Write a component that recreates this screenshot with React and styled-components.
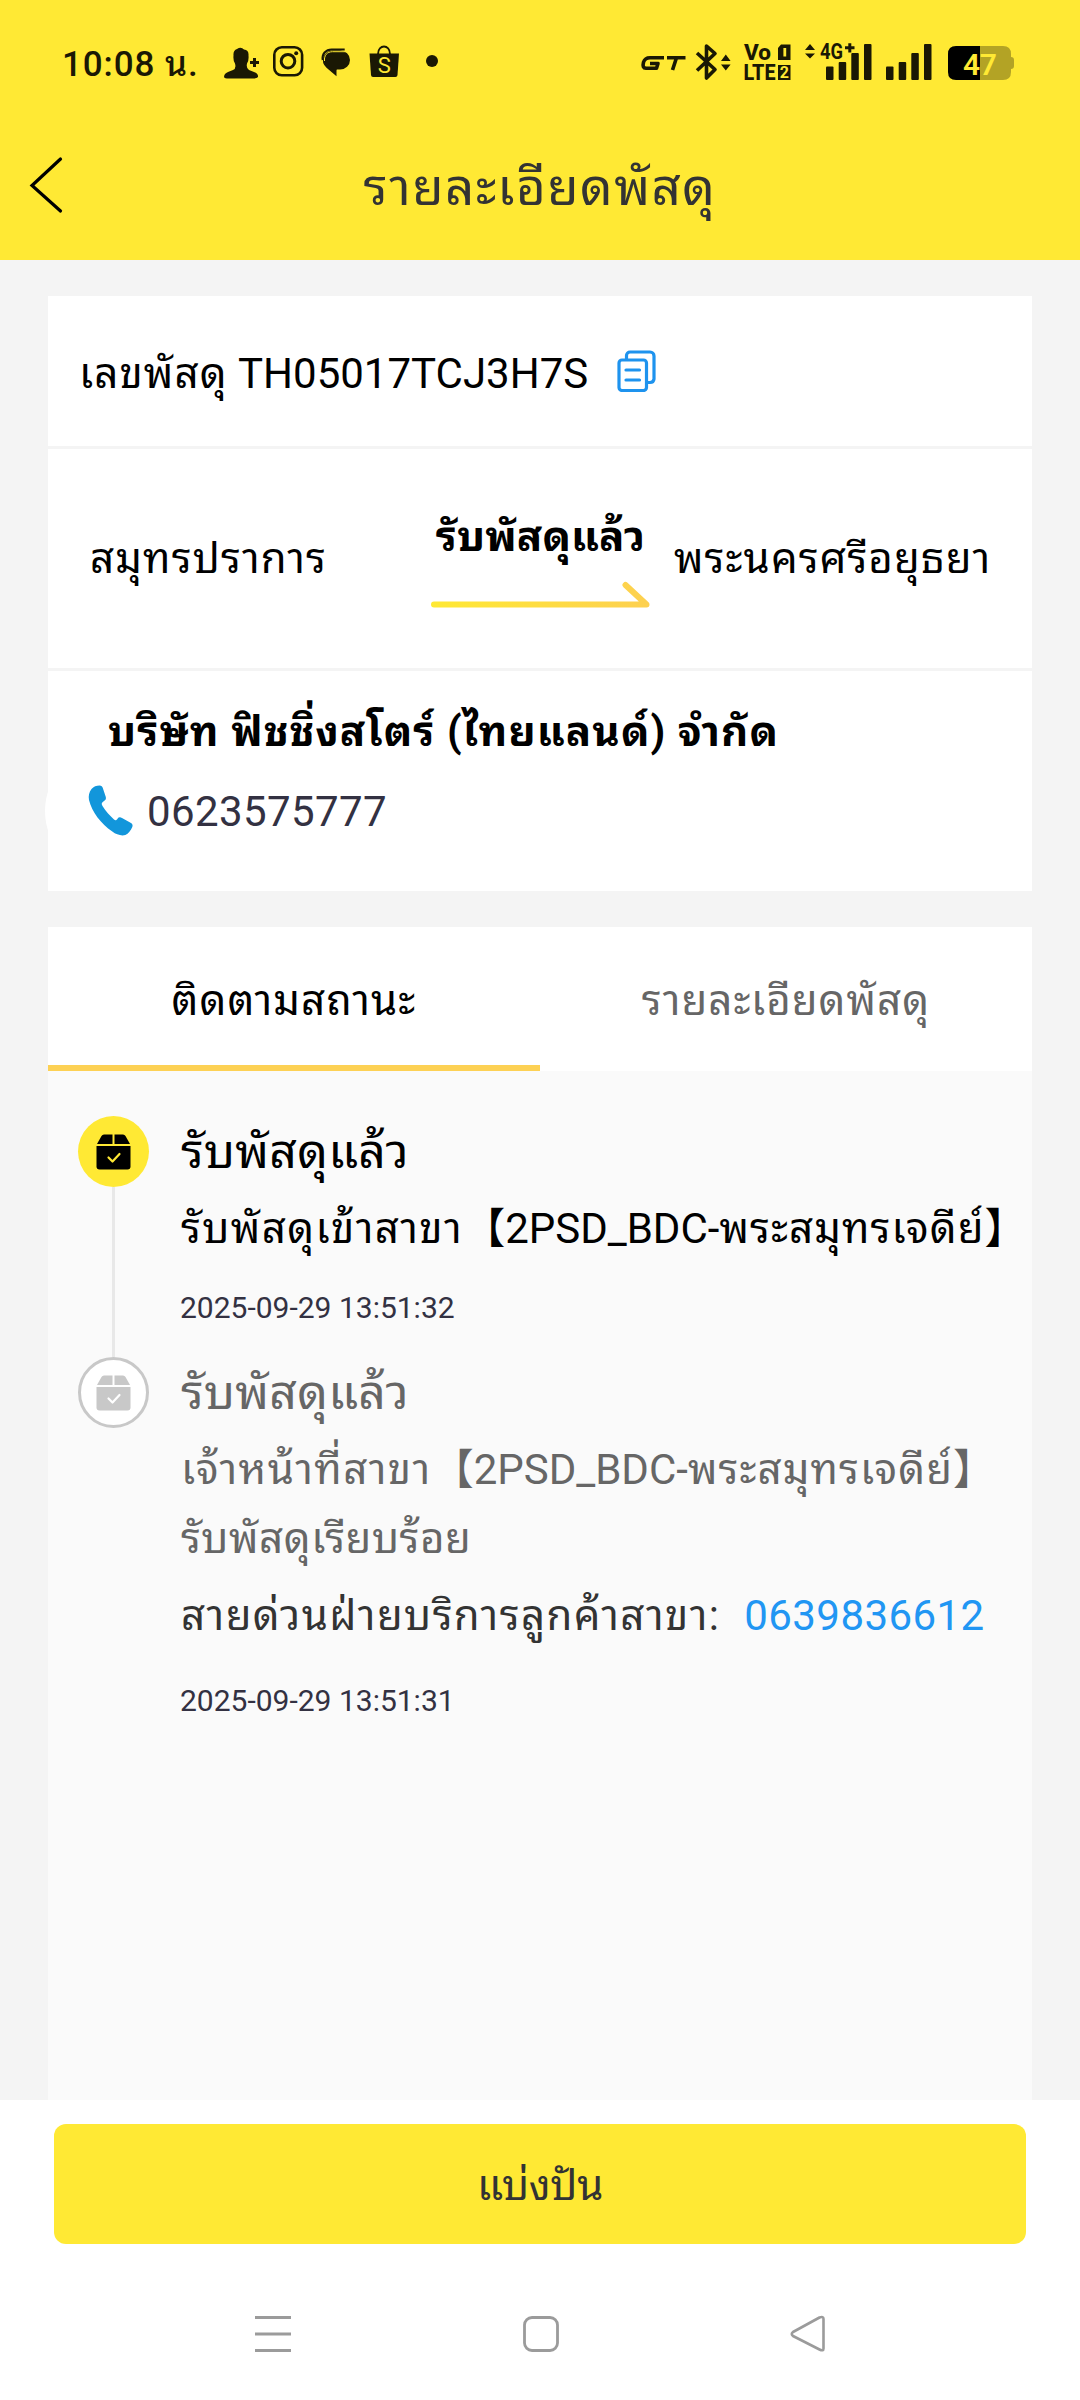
import React from "react";
import styled, { createGlobalStyle } from "styled-components";

const GlobalStyle = createGlobalStyle`
    :root {
        --yellow: #ffe934;
        --amber: #fdd154;
        --ink: #1a1804;
        --text: #333;
        --muted: #666;
        --slate: #333142;
        --blue: #2196f3;
        --page: #f4f4f4;
    }

    body {
        margin: 0;
        background: #fff;
        font-family: Roboto, "Noto Sans Thai Looped", "Noto Sans CJK SC", sans-serif;
        -webkit-font-smoothing: antialiased;
    }

    svg { display: block; flex-shrink: 0; }
`;

const Screen = styled.div`
    width: 1080px;
    height: 2400px;
    display: flex;
    flex-direction: column;
    overflow: hidden;
`;

const Top = styled.header`
    height: 260px;
    background: var(--yellow);
`;

const StatusBar = styled.div`
    height: 124px;
    display: flex;
    align-items: center;
    padding: 0 66px 0 62px;
    box-sizing: border-box;
    color: var(--ink);
`;

const Clock = styled.span`
    width: 162px;
    padding-top: 5px;
    font-size: 35px;
    font-weight: 500;
    letter-spacing: .9px;
    line-height: 50px;
    white-space: nowrap;
`;

const RightIcons = styled.div`
    display: flex;
    align-items: center;
    margin-left: auto;
`;

const NavBar = styled.div`
    height: 126px;
    display: grid;
    grid-template-columns: 120px 1fr 120px;
    align-items: center;
`;

const BackButton = styled.div`
    padding-left: 28px;
    margin-top: -4px;
`;

const Label = styled.span`
    display: block;
    font-size: ${props => props.$size || 42}px;
    line-height: ${props => props.$line || 60}px;
    font-weight: ${props => props.$bold ? 700 : 400};
    color: ${props => props.$color || "#000"};
    letter-spacing: ${props => props.$track || 0}px;
    white-space: nowrap;
`;

/* thai run inside a mixed line */
const Thai = styled.b`
    font-weight: inherit;
    letter-spacing: ${props => props.$track || 1.1}px;
`;

const PageTitle = styled(Label)`
    text-align: center;
    padding-top: 2px;
`;

const Main = styled.main`
    height: 1804px;
    padding: 36px 48px 0;
    background: var(--page);
    display: flex;
    flex-direction: column;
`;

const Card = styled.section`
    display: flex;
    flex-direction: column;
    gap: 3px;
    margin-bottom: 36px;
`;

const NumberRow = styled.div`
    height: 150px;
    display: flex;
    align-items: center;
    padding: 5px 31px 0;
    box-sizing: border-box;
    background: #fff;

    svg { margin-left: 29px; margin-top: -6px; }
`;

const RouteRow = styled.div`
    height: 219px;
    display: grid;
    grid-template-columns: 383px 219px 1fr;
    align-items: center;
    background: #fff;
`;

const RouteFrom = styled(Label)`
    padding-left: 42px;
`;

const RouteTo = styled(Label)`
    padding-left: 24px;
`;

const RouteState = styled.div`
    display: flex;
    flex-direction: column;
    align-items: center;
    gap: 13px;
`;

const CompanyRow = styled.div`
    height: 220px;
    padding-top: 31px;
    box-sizing: border-box;
    background: #fff;
`;

const CompanyName = styled(Label)`
    padding-left: 60px;
`;

const PhoneLine = styled.div`
    display: flex;
    align-items: center;
    position: relative;
    margin-top: 20px;
    padding-left: 40px;

    &::before {
        content: "";
        position: absolute;
        left: -3px;
        top: -34px;
        width: 126px;
        height: 126px;
        border-radius: 50%;
        background: #fff;
        clip-path: inset(30px 0 30px 0);
    }

    svg, span { position: relative; }
    svg { margin-top: -3px; }
    span { margin-left: 13px; }
`;

const Tabs = styled.div`
    height: 144px;
    display: grid;
    grid-template-columns: 1fr 1fr;
    background: #fff;
`;

const Tab = styled.div`
    display: flex;
    align-items: center;
    justify-content: center;
    padding-top: 9px;
    border-bottom: 6px solid ${props => props.$active ? "var(--amber)" : "#fff"};
`;

const Timeline = styled.div`
    flex: 1;
    padding: 45px 0 0 30px;
    background: #fafafa;
`;

const Item = styled.div`
    display: flex;
    gap: 32px;
`;

const Rail = styled.div`
    width: 71px;
    display: flex;
    flex-direction: column;
    align-items: center;
`;

const Badge = styled.div`
    width: 71px;
    height: 71px;
    box-sizing: border-box;
    border-radius: 50%;
    display: flex;
    align-items: center;
    justify-content: center;
    background: ${props => props.$active ? "var(--yellow)" : "#fff"};
    border: ${props => props.$active ? "0" : "3px solid #c8c8c8"};
`;

const Connector = styled.div`
    flex: 1;
    width: 3px;
    background: #e8e8e8;
`;

const ItemBody = styled.div`
    height: ${props => props.$height || "auto"};
`;

const Details = styled.div`
    padding-top: 7px;
`;

const Hotline = styled.div`
    display: flex;
    margin-top: 13px;
    gap: 24px;
`;

const Time = styled(Label)`
    margin-top: ${props => props.$gap}px;
    margin-left: -1px;
`;

const Footer = styled.footer`
    flex: 1;
    background: #fff;
    padding: 24px 54px 0;
`;

const ShareButton = styled.div`
    height: 120px;
    display: flex;
    align-items: center;
    justify-content: center;
    border-radius: 12px;
    padding-top: 3px;
    box-sizing: border-box;
    background: var(--yellow);
`;

const SystemNav = styled.nav`
    display: flex;
    justify-content: space-between;
    align-items: center;
    width: 571px;
    margin: 71px 0 0 201px;
`;

/* status bar drawings */

const NotificationIcons = () => (
    <svg width="216" height="34" viewBox="224 46 216 34" fill="currentColor">
        <path d="M237 50 q4 -2.500 7 .5 q5 .5 4.500 6 q.5 5 -1.500 8 q-1 5 2 6.500 l5 2 q4.500 1.500 4 5 q-1 1.500 -5 1.500 h-24 q-4.500 0 -5 -1.500 q0 -3.500 4 -5 l5 -2 q3.500 -1.500 2 -6.500 q-2 -3 -1.500 -8 q-.5 -5 3.500 -6.500z" />
        <path d="M250 63.500h9M254.500 59v9" stroke="currentColor" strokeWidth="3" />
        <g fill="none" stroke="currentColor" strokeWidth="2.600">
            <rect x="274.300" y="48.300" width="27.800" height="28" rx="7.500" />
            <circle cx="288" cy="62.200" r="6.800" strokeWidth="3" />
        </g>
        <circle cx="296.200" cy="54.200" r="2" />
        <path d="M332 51.500h8a10 9.500 0 0 1 0 19h-2.500c-.8 0-1 .5-1 1.200v5.500l-10-8.500a11 10 0 0 1 5.500-17.200z" />
        <path d="M322.700 61c-1-6 3-10.500 9-10.500h13" fill="none" stroke="currentColor" strokeWidth="2" />
        <path d="M324.500 62c-.5-5.500 2.500-9.300 8-9.300h13" fill="none" stroke="#ffe934" strokeWidth="1" />
        <path d="M369.500 54.500h29.500l-1.500 21.500q-.2 2-2 2h-22.500q-1.800 0-2-2z" />
        <path d="M378 55c0-10 12-10 12 0" fill="none" stroke="currentColor" strokeWidth="1.800" />
        <text x="384.200" y="74" fontSize="22" fontFamily="Roboto" textAnchor="middle" fill="#ffe934">S</text>
        <circle cx="432" cy="62" r="6" />
    </svg>
);

const SignalIcons = () => (
    <svg width="376" height="56" viewBox="638 34 376 56" fill="currentColor" fontFamily="Roboto">
        <g fill="none" stroke="currentColor" strokeWidth="3.600" strokeLinejoin="round">
            <path d="M664 57.800h-14q-5 0-6.500 4.500q-1.500 5.900 2.500 5.900h10.500l1.500-4.700h-8" />
            <path d="M667 57.800h18.500M676.500 57.800l-4 12.200" />
            <path d="M697 53l18 16.500l-8.500 8.500v-32l8.500 7.500l-18 17" />
        </g>
        <path d="M721 61l4.800-6.500l4.800 6.500zM721 64.500h9.600l-4.800 6z" />
        <text x="744" y="60" fontSize="22" fontWeight="800" textLength="27" lengthAdjust="spacingAndGlyphs">Vo</text>
        <text x="743.500" y="79.500" fontSize="22" fontWeight="800" textLength="32" lengthAdjust="spacingAndGlyphs">LTE</text>
        <path d="M781 44.500h9.500v15.500h-12.500v-12zM778 65h12.500v15h-12.500z" />
        <path d="M784.800 48v8.500" stroke="#ffe934" strokeWidth="2.800" />
        <text x="784.300" y="78.300" fontSize="16" fontWeight="700" textAnchor="middle" fill="#ffe934">2</text>
        <path d="M805 50l5-6l5 6zM805 53.500h10l-5 5z" />
        <text x="820" y="59" fontSize="21.500" fontWeight="700" textLength="23" lengthAdjust="spacingAndGlyphs">4G</text>
        <path d="M845 47.800h9.500M849.800 43.300v9.200" stroke="currentColor" strokeWidth="3" />
        <rect x="826" y="66.500" width="7.500" height="13.500" rx="1" />
        <rect x="838.700" y="62" width="7.500" height="18" rx="1" />
        <rect x="851.300" y="53" width="7.500" height="27" rx="1" />
        <rect x="864" y="44" width="7.500" height="36" rx="1" />
        <rect x="886" y="66.500" width="7.500" height="13.500" rx="1" />
        <rect x="898.700" y="62" width="7.500" height="18" rx="1" />
        <rect x="911.300" y="53" width="7.500" height="27" rx="1" />
        <rect x="924" y="44" width="7.500" height="36" rx="1" />
        <path d="M980 46h23q8 0 8 8v3q3 0 3 3v6q0 3-3 3v3q0 8-8 8h-23z" fill="#b3a325" />
        <path d="M980 46h-24q-8 0-8 8v18q0 8 8 8h24z" fill="#000" />
        <text x="963" y="74.600" fontSize="30" fontWeight="600" fill="#ffe934" textLength="34">47</text>
    </svg>
);

const CopyIcon = () => (
    <svg width="40" height="42" viewBox="0 0 40 42" fill="none" stroke="#1e93ee" strokeWidth="3.200" strokeLinecap="round">
        <path d="M9.500 9.500V5.500a3.500 3.500 0 0 1 3.500-3.500h20a4 4 0 0 1 4 4v23a4 4 0 0 1-4 3.500h-3" />
        <rect x="2" y="10" width="27.500" height="30.500" rx="3" />
        <path d="M9 20h13.500M9 30h13.500" />
    </svg>
);

const RouteArrow = () => (
    <svg width="219" height="30" viewBox="0 0 219 30">
        <defs>
            <linearGradient id="route" gradientUnits="userSpaceOnUse" x1="0" y1="0" x2="219" y2="0">
                <stop offset="0" stopColor="#ffe934" />
                <stop offset="1" stopColor="#fdd050" />
            </linearGradient>
        </defs>
        <path d="M3 24.500H215.500L194.500 5" fill="none" stroke="url(#route)" strokeWidth="6" strokeLinecap="round" strokeLinejoin="round" />
    </svg>
);

const PhoneIcon = () => (
    <svg width="46" height="52" viewBox="0 0 46 52" fill="#1296db">
        <path d="M3.500 4C5.500 1.500 8.500 .5 11.500 .5c2 0 2.800 1 3.300 2.500l3 9c.5 2-.3 3-1.800 4c-2.500 1.500-2.800 3-1.500 5c3.500 5.500 7.500 9.800 11.500 13.500c1.500 1.200 2.500 .8 3.500-.8c1-1.500 2.500-1.800 4.500-.8l9 5c1.500 1 2 2.300 1.300 4c-1.500 3.600-3.800 6.500-7 8.200c-4 1-9-.3-13-3.500C13 38.500 4 27.500 1 15C.3 11 1 7 3.500 4z" />
    </svg>
);

const PackageIcon = ({ color, check }) => (
    <svg width="35" height="36" viewBox="0 0 35 36" fill={color}>
        <path d="M8 .5h8.500v9.500H1L5.500 2Q6.300.5 8 .5zM18.500.5H27q1.700 0 2.500 1.500L34 10H18.500z" />
        <path d="M.5 12h34v20.500q0 3-3 3h-28q-3 0-3-3z" />
        <path d="M12.500 23.500l4 4l7-7.500" fill="none" stroke={check} strokeWidth="2.200" strokeLinecap="round" strokeLinejoin="round" />
    </svg>
);

const App = () => {
    return (
        <Screen>
            <GlobalStyle />
            <Top>
                <StatusBar>
                    <Clock>10:08 น.</Clock>
                    <NotificationIcons />
                    <RightIcons>
                        <SignalIcons />
                    </RightIcons>
                </StatusBar>
                <NavBar>
                    <BackButton>
                        <svg width="36" height="58" viewBox="0 0 36 58" fill="none" stroke="#000" strokeWidth="3.200" strokeLinecap="round">
                            <path d="M32.500 3L4 29.500L32.500 55" />
                        </svg>
                    </BackButton>
                    <PageTitle $size={51} $line={66} $track={1.5} $color="var(--text)">รายละเอียดพัสดุ</PageTitle>
                </NavBar>
            </Top>

            <Main>
                <Card>
                    <NumberRow>
                        <Label><Thai>เลขพัสดุ</Thai> TH05017TCJ3H7S</Label>
                        <CopyIcon />
                    </NumberRow>
                    <RouteRow>
                        <RouteFrom $track={1.15}>สมุทรปราการ</RouteFrom>
                        <RouteState>
                            <Label $bold $track={0.15}>รับพัสดุแล้ว</Label>
                            <RouteArrow />
                        </RouteState>
                        <RouteTo $track={1.1}>พระนครศรีอยุธยา</RouteTo>
                    </RouteRow>
                    <CompanyRow>
                        <CompanyName $bold $track={1.1}>บริษัท ฟิชชิ่งสโตร์ (ไทยแลนด์) จำกัด</CompanyName>
                        <PhoneLine>
                            <PhoneIcon />
                            <Label $color="var(--slate)" $track={0.4}>0623575777</Label>
                        </PhoneLine>
                    </CompanyRow>
                </Card>

                <Tabs>
                    <Tab $active>
                        <Label $track={1.1}>ติดตามสถานะ</Label>
                    </Tab>
                    <Tab>
                        <Label $track={1.05} $color="var(--muted)">รายละเอียดพัสดุ</Label>
                    </Tab>
                </Tabs>

                <Timeline>
                    <Item>
                        <Rail>
                            <Badge $active><PackageIcon color="#000" check="#ffe934" /></Badge>
                            <Connector />
                        </Rail>
                        <ItemBody $height="241px">
                            <Label $size={48} $line={71} $track={0.3}>รับพัสดุแล้ว</Label>
                            <Details>
                                <Label $line={69}><Thai $track={1.4}>รับพัสดุเข้าสาขา</Thai>【2PSD_BDC-<Thai>พระสมุทรเจดีย์</Thai>】</Label>
                            </Details>
                            <Time $size={30} $line={40} $gap={25} $color="var(--slate)">2025-09-29 13:51:32</Time>
                        </ItemBody>
                    </Item>
                    <Item>
                        <Rail>
                            <Badge><PackageIcon color="#c8c8c8" check="#fff" /></Badge>
                        </Rail>
                        <ItemBody>
                            <Label $size={48} $line={71} $track={0.3} $color="var(--muted)">รับพัสดุแล้ว</Label>
                            <Details>
                                <Label $line={69} $color="var(--muted)"><Thai $track={1.4}>เจ้าหน้าที่สาขา</Thai>【2PSD_BDC-<Thai>พระสมุทรเจดีย์</Thai>】</Label>
                                <Label $line={69} $track={0.55} $color="var(--muted)">รับพัสดุเรียบร้อย</Label>
                            </Details>
                            <Hotline>
                                <Label $color="var(--text)" $track={1.4}>สายด่วนฝ่ายบริการลูกค้าสาขา:</Label>
                                <Label $color="var(--blue)" $track={0.4}>0639836612</Label>
                            </Hotline>
                            <Time $size={30} $line={40} $gap={35} $color="var(--slate)">2025-09-29 13:51:31</Time>
                        </ItemBody>
                    </Item>
                </Timeline>
            </Main>

            <Footer>
                <ShareButton>
                    <Label $color="var(--text)" $track={-0.3}>แบ่งปัน</Label>
                </ShareButton>
                <SystemNav>
                    <svg width="36" height="38" viewBox="0 0 36 38" fill="none" stroke="#9b9b9b" strokeWidth="3">
                        <path d="M0 2.500h36M0 19h36M0 35.500h36" />
                    </svg>
                    <svg width="36" height="38" viewBox="0 0 36 38" fill="none" stroke="#9b9b9b" strokeWidth="2.800">
                        <rect x="1.500" y="2.500" width="33" height="33" rx="7.500" />
                    </svg>
                    <svg width="36" height="38" viewBox="0 0 36 38" fill="none" stroke="#9b9b9b" strokeWidth="2.600" strokeLinejoin="round">
                        <path d="M3 17L29.500 2.500Q33.500 1 33.500 4V33.500Q33.500 36.500 29.500 34.500L3 21Q.5 19 3 17z" />
                    </svg>
                </SystemNav>
            </Footer>
        </Screen>
    );
};

export default App;
